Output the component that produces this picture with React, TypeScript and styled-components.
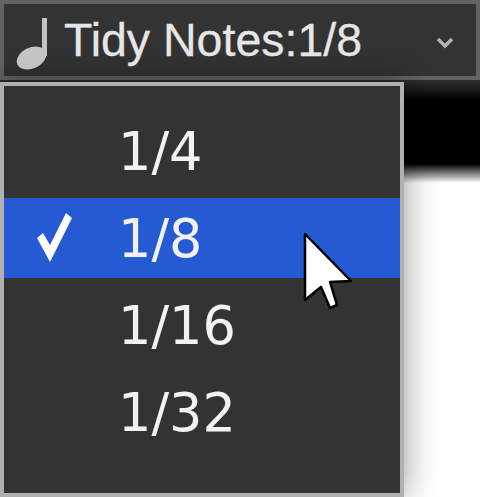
import React, {FC} from 'react';
import styled, {createGlobalStyle} from "styled-components";

const GlobalStyle = createGlobalStyle`
  html, body {
    margin: 0;
    padding: 0;
    background: #fff;
  }
`;

const Page = styled.div`
  position: relative;
  width: 480px;
  height: 497px;
  overflow: hidden;
  background: linear-gradient(180deg, #2c2c2c 0, #2c2c2c 82px, #000 100px, #000 164px, #fff 183px);
`;

const Toolbar = styled.div`
  display: flex;
  align-items: center;
  box-sizing: border-box;
  width: 480px;
  height: 80px;
  padding: 0 22px 0 12px;
  background: #333;
  border: 4px solid #626262;
`;

const Title = styled.span`
  flex: 1;
  margin-left: 16px;
  font-family: "Liberation Sans", Arial, sans-serif;
  font-size: 46.5px;
  line-height: 1;
  color: #e6e6e6;
  white-space: nowrap;
  -webkit-text-stroke: 0.3px #e6e6e6;
`;

const Menu = styled.div`
  display: grid;
  grid-auto-rows: 80px;
  row-gap: 7px;
  box-sizing: border-box;
  width: 404px;
  height: 415px;
  margin-top: 2px;
  padding: 25px 0 0;
  background: #333;
  border: 4px solid #b0b0b0;
  box-shadow: 0 0 32px rgba(0, 0, 0, 0.42);
`;

const Row = styled.div<{$active?: boolean}>`
  display: flex;
  align-items: center;
  padding: 3px 0 0 114px;
  position: relative;
  background: ${({$active}) => ($active ? '#255ad2' : 'transparent')};
  color: #f2f2f2;
  font-family: "DejaVu Sans", Verdana, sans-serif;
  font-size: 52.5px;
  line-height: 1;
`;

const Check = styled.svg`
  position: absolute;
  left: 32px;
  top: 14px;
`;

const Cursor = styled.svg`
  position: absolute;
  left: 300px;
  top: 230px;
`;

const Note = styled.svg`
  margin-top: 8px;
`;

const ChevronIcon = styled.svg`
  margin-top: 6px;
`;

const NoteIcon = () => (
  <Note width="32" height="52" viewBox="0 0 32 52">
    <rect x="26" y="0" width="5" height="38" fill="#c4c4c4"/>
    <ellipse cx="15.5" cy="40" rx="15.5" ry="10.5" transform="rotate(-25 15.5 40)" fill="#c4c4c4"/>
  </Note>
);

const Chevron = () => (
  <ChevronIcon width="18" height="12" viewBox="0 0 18 12">
    <path d="M2 2 L9 9 L16 2" fill="none" stroke="#b4b4b4" strokeWidth="3.4"/>
  </ChevronIcon>
);

const items = ['1/4', '1/8', '1/16', '1/32'];

const App: FC = () => {
  return (
    <Page>
      <GlobalStyle/>
      <Toolbar>
        <NoteIcon/>
        <Title>Tidy Notes:1/8</Title>
        <Chevron/>
      </Toolbar>
      <Menu>
        {items.map(item => (
          <Row key={item} $active={item === '1/8'}>
            {item === '1/8' && (
              <Check width="38" height="52" viewBox="0 0 38 52">
                <path d="M1 26 L7 21 L14 33 L30 1 L36 6 L14 50 Z" fill="#fff"/>
              </Check>
            )}
            {item}
          </Row>
        ))}
      </Menu>
      <Cursor width="60" height="84" viewBox="0 0 60 84">
        <path d="M5 4 L51 51 L30 52 L37 75 L30 78 L21 57 L5 70 Z" fill="#fff" stroke="#000" strokeWidth="2.5" strokeLinejoin="round"/>
      </Cursor>
    </Page>
  );
};

export default App;
